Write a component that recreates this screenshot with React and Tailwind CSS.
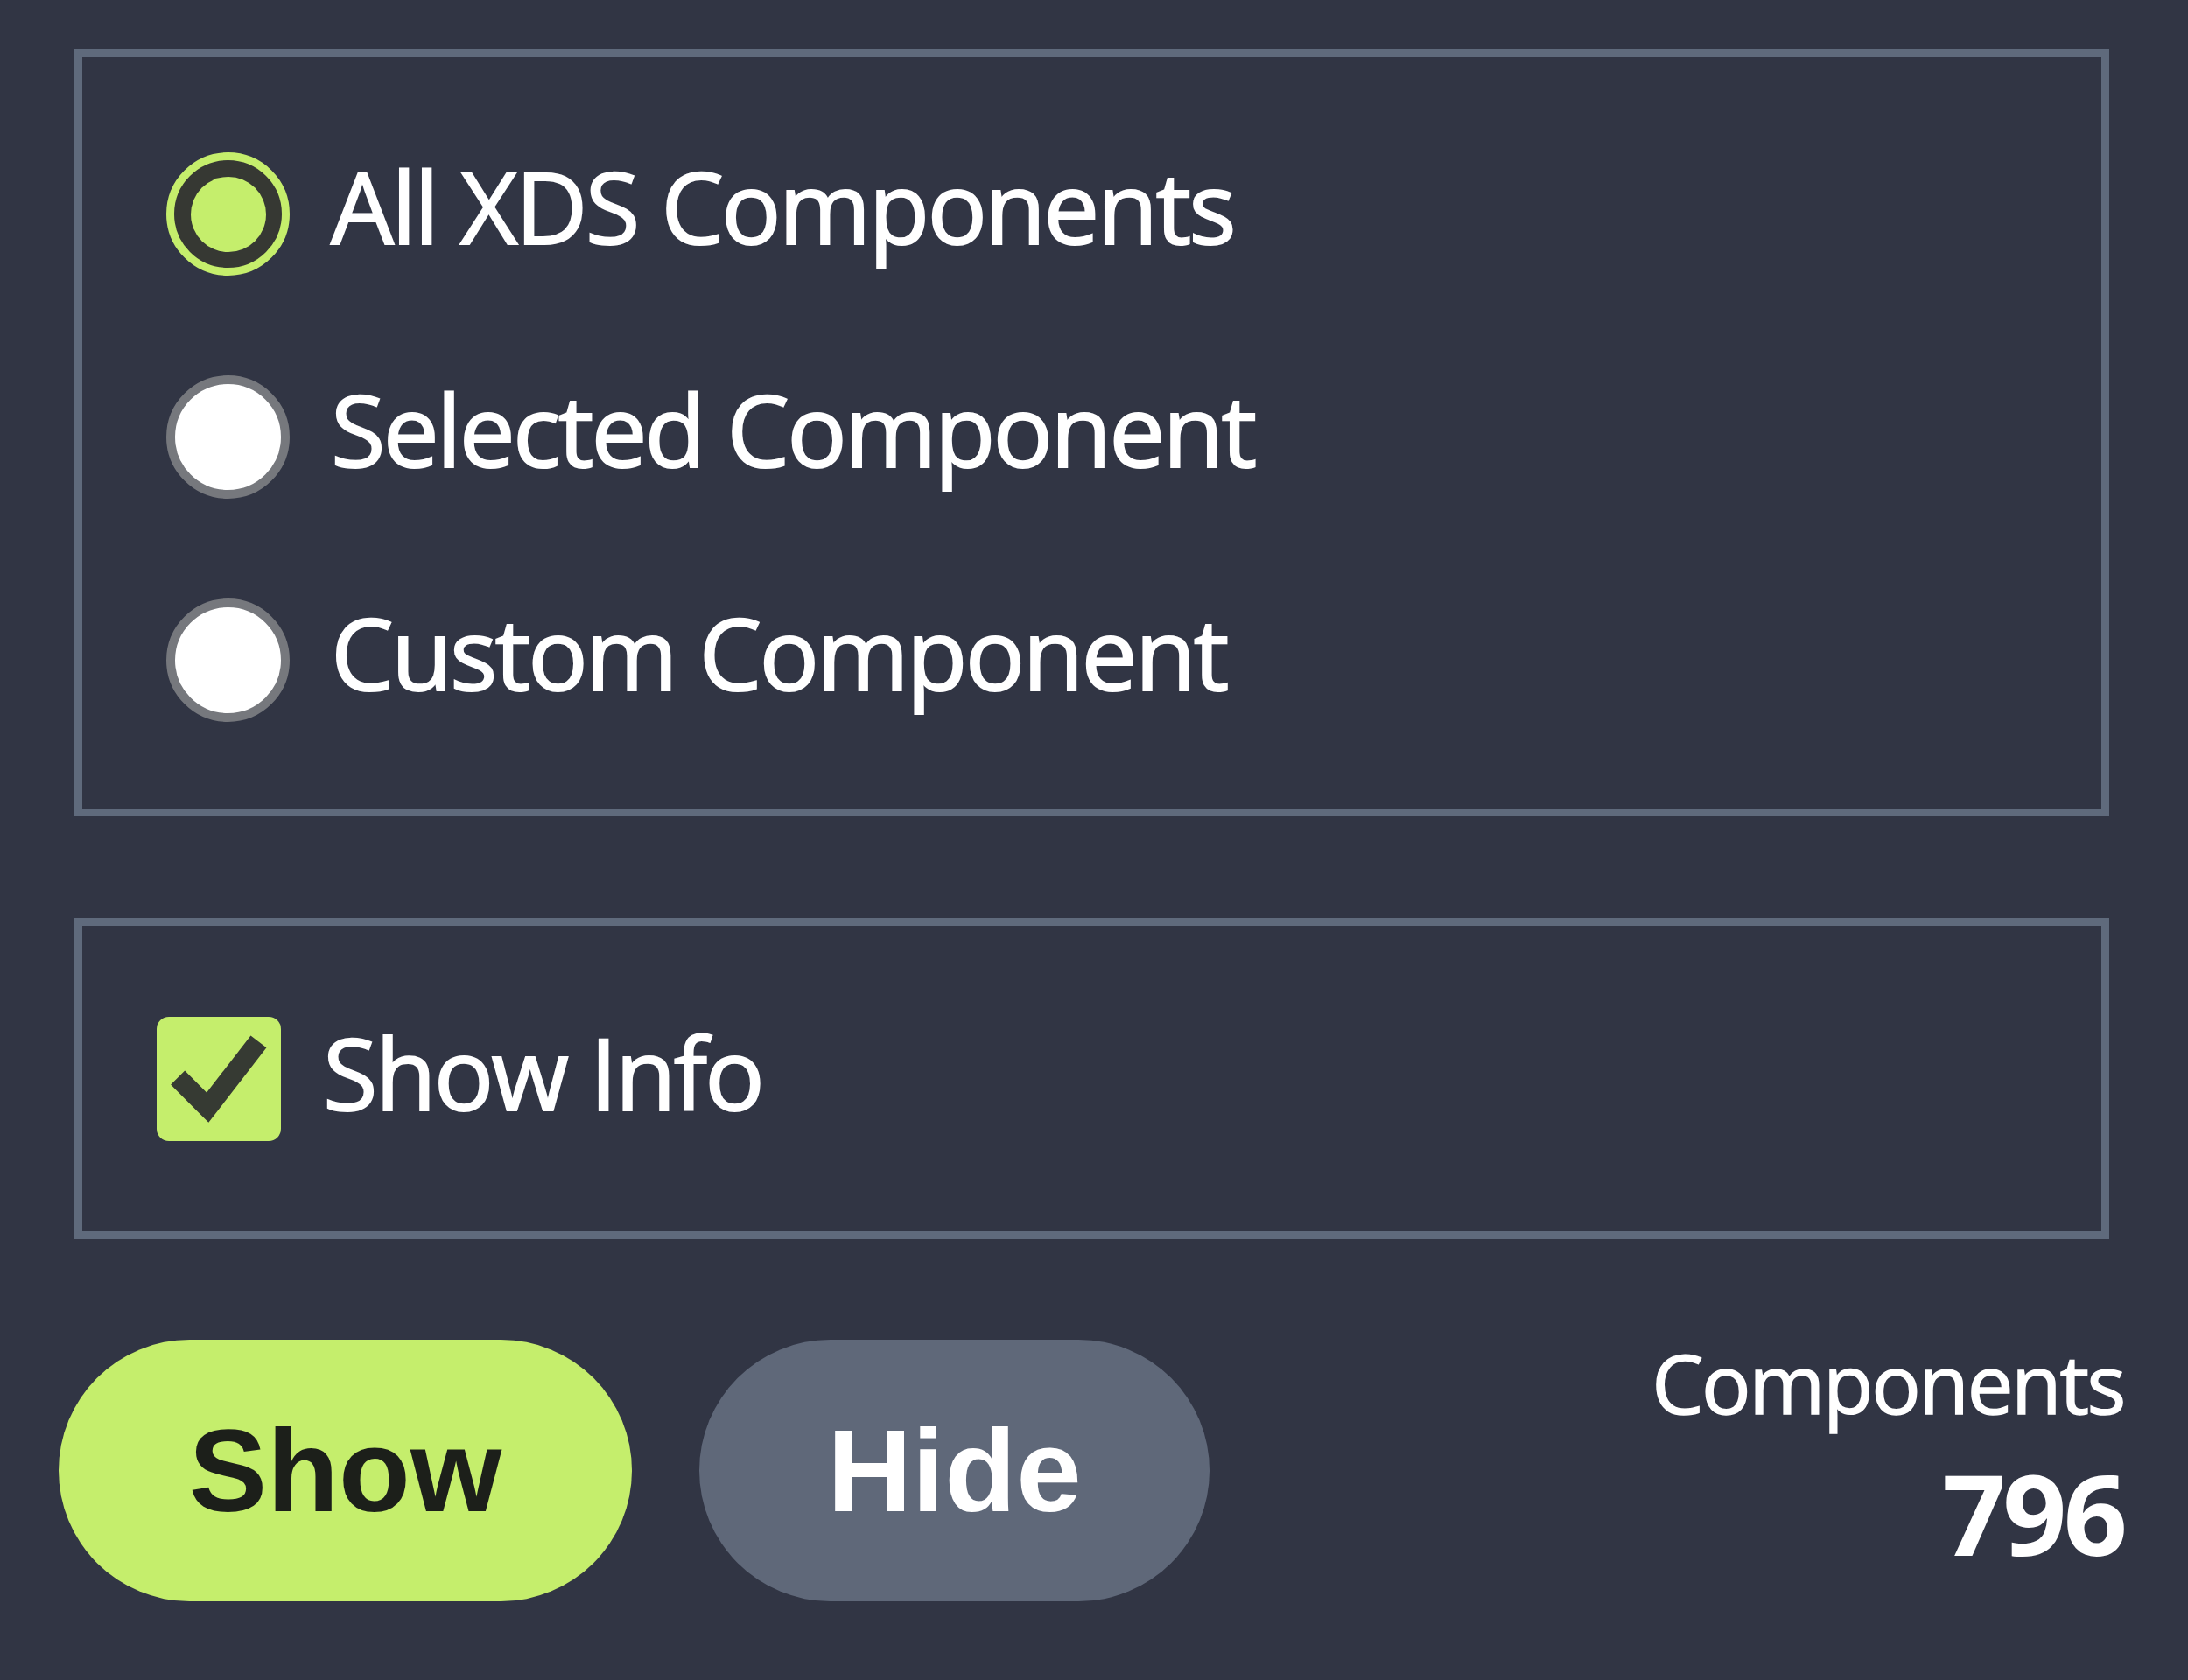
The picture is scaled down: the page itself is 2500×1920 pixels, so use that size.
import React, { useState } from "react";

const options = ["All XDS Components", "Selected Component", "Custom Component"];

const Radio = ({ checked }) =>
  checked ? (
    <span className="flex h-[141px] w-[141px] shrink-0 items-center justify-center rounded-full border-[9px] border-[#c5ee6c] bg-[#363833]">
      <span className="h-[86px] w-[86px] rounded-full bg-[#c5ee6c]" />
    </span>
  ) : (
    <span className="h-[141px] w-[141px] shrink-0 rounded-full border-[10px] border-[#76787d] bg-white" />
  );

const App = () => {
  const [selected, setSelected] = useState(0);
  const [showInfo, setShowInfo] = useState(true);

  return (
    <div
      className="flex h-[1920px] w-[2500px] flex-col bg-[#313544] pt-[56px] text-white"
      style={{ fontFamily: '"Open Sans", "Noto Sans", sans-serif' }}
    >
      {/* scope */}
      <div className="ml-[85px] mr-[90px] flex h-[877px] flex-col gap-[114px] border-[9px] border-[#5f6a7c] pl-[96px] pt-[109px]">
        {options.map((label, i) => (
          <div
            key={label}
            onClick={() => setSelected(i)}
            className="flex h-[141px] items-center gap-[47px]"
          >
            <Radio checked={selected === i} />
            <span className="mb-[20px] text-[114px] leading-none tracking-[-0.025em] [-webkit-text-stroke:2px_white]">
              {label}
            </span>
          </div>
        ))}
      </div>

      {/* options */}
      <div className="ml-[85px] mr-[90px] mt-[116px] flex h-[367px] items-center border-[9px] border-[#5f6a7c] pl-[85px]">
        <div onClick={() => setShowInfo(!showInfo)} className="flex items-center gap-[48px]">
          <span className="flex h-[142px] w-[142px] items-center justify-center rounded-[14px] bg-[#c5ee6c]">
            {showInfo && (
              <svg viewBox="0 0 100 100" className="h-full w-full">
                <polyline
                  points="17,49 41,73 82,20"
                  fill="none"
                  stroke="#363a33"
                  strokeWidth="16"
                  strokeLinejoin="miter"
                />
              </svg>
            )}
          </span>
          <span className="mb-[16px] text-[114px] leading-none tracking-[-0.025em] [-webkit-text-stroke:2px_white]">
            Show Info
          </span>
        </div>
      </div>

      {/* actions */}
      <div className="mt-[115px] flex h-[299px] items-center pl-[67px] pr-[73px]">
        <button
          className="flex h-[299px] w-[655px] items-center justify-center rounded-[150px] bg-[#c5ee6c] text-[134px] font-bold text-[#1c1f1a]"
          style={{ fontFamily: '"Liberation Sans", Arial, sans-serif' }}
        >
          Show
        </button>
        <button
          className="ml-[77px] flex h-[299px] w-[583px] items-center justify-center rounded-[150px] bg-[#5f6879] text-[134px] font-bold text-white"
          style={{ fontFamily: '"Liberation Sans", Arial, sans-serif' }}
        >
          Hide
        </button>
        <div className="ml-auto flex flex-col items-end gap-[38px] pb-[36px]">
          <span className="text-[94px] leading-none tracking-[-0.025em] [-webkit-text-stroke:1.5px_white]">
            Components
          </span>
          <span className="text-[128px] font-bold leading-none tracking-[-0.03em]">796</span>
        </div>
      </div>
    </div>
  );
};

export default App;
